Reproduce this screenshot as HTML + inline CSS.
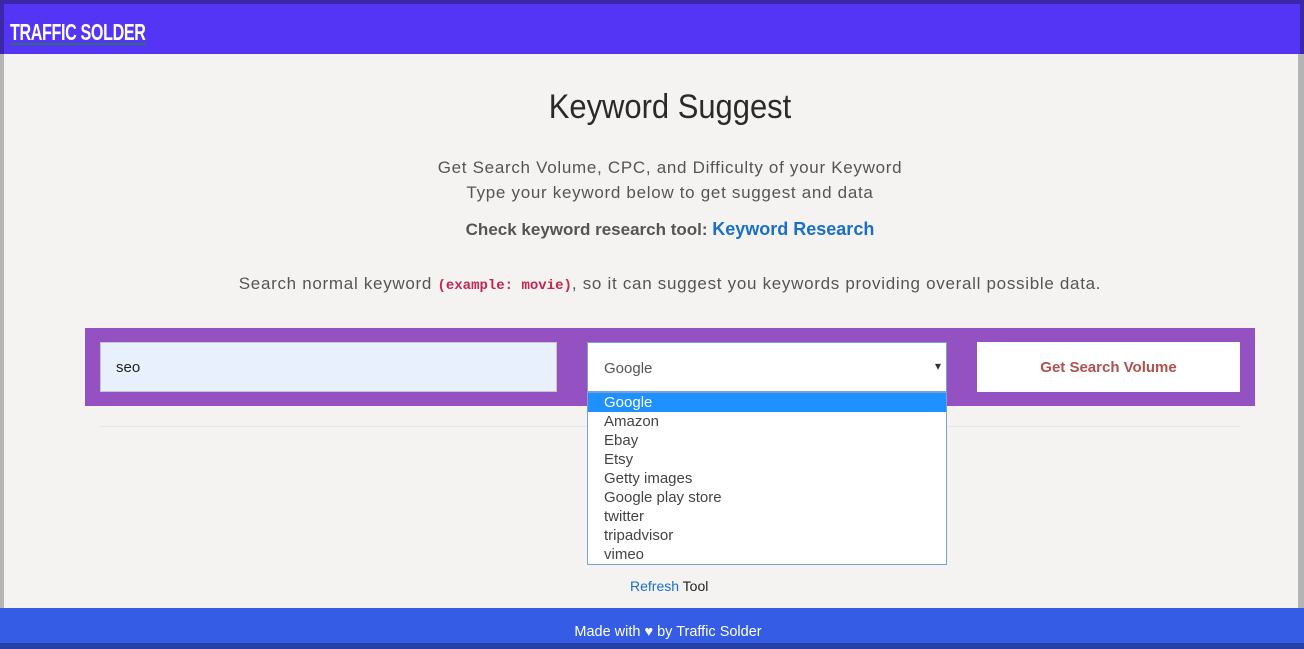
<!DOCTYPE html>
<html><head><meta charset="utf-8"><style>
*{margin:0;padding:0;box-sizing:border-box}
body{width:1304px;height:649px;overflow:hidden;background:#f4f3f1;font-family:"Liberation Sans",sans-serif;position:relative}
.hdr{position:absolute;left:0;top:0;width:1304px;height:54px;background:#5535f5;border-top:4px solid #3b28a8;border-left:4px solid #3b28a8;border-right:4px solid #3b28a8}
.logo{position:absolute;left:6px;top:17px;color:#fff;font:bold 23px "Liberation Sans Narrow","Liberation Sans",sans-serif;letter-spacing:-0.5px;border-bottom:2px solid #2e6e6e;line-height:22px;transform:scaleX(0.70);transform-origin:left}
.lb{position:absolute;left:0;top:54px;width:4px;height:554px;background:#b5b5b5}
.rb{position:absolute;right:0;top:54px;width:6px;height:554px;background:#b5b5b5}
h1{position:absolute;left:0;width:1340px;top:88px;text-align:center;font:normal 34px "Liberation Sans Narrow","Liberation Sans",sans-serif;color:#2a2a2a;transform:scaleX(0.91);transform-origin:670px 0}
.t{position:absolute;left:0;width:1340px;text-align:center;color:#555;font-size:17px}
.w{letter-spacing:0.7px}
.code{font-family:"Liberation Mono",monospace;color:#c7254e;font-size:14px;font-weight:bold;letter-spacing:0}
.bar{position:absolute;left:85px;top:328px;width:1170px;height:78px;background:#9351c1}
.inp{position:absolute;left:100px;top:342px;width:457px;height:50px;background:#e8f0fe;border:1px solid #c8c8c8;font-size:15px;padding:16px 15px;color:#222}
.sel{position:absolute;left:587px;top:342px;width:360px;height:50px;background:#fff;border:1px solid #7aa0da;font-size:15px;padding:17px 16px;color:#555}
.sel:after{content:"▾";position:absolute;right:5px;top:16px;font-size:12px;color:#333}
.btn{position:absolute;left:977px;top:342px;width:263px;height:50px;background:#fff;color:#b35050;font-weight:bold;font-size:15px;text-align:center;line-height:52px}
.dd{position:absolute;left:587px;top:392px;width:360px;height:173px;background:#fff;border:1px solid #7aa0da;font-size:15px;color:#444}
.dd div{height:19px;line-height:19px;padding-left:16px}
.dd .a{background:#1e90ff;color:#fff}
.hr{position:absolute;left:100px;top:426px;width:1140px;height:1px;background:#e6e6e6}
.ref{position:absolute;left:630px;top:578px;font-size:14px;color:#222}
.ft{position:absolute;left:0;top:608px;width:1304px;height:41px;background:#355ce5;color:#fff;font-size:14.5px;text-align:center;padding-top:16px;border-bottom:6px solid #273fa8}
</style></head><body>
<div class="hdr"><span class="logo">TRAFFIC SOLDER</span></div>
<div class="lb"></div><div class="rb"></div>
<h1>Keyword Suggest</h1>
<div class="t w" style="top:158px">Get Search Volume, CPC, and Difficulty of your Keyword</div>
<div class="t w" style="top:183px">Type your keyword below to get suggest and data</div>
<div class="t" style="top:219px;font-weight:bold">Check keyword research tool: <span style="color:#1a6fc9;font-size:18px">Keyword Research</span></div>
<div class="t w" style="top:274px">Search normal keyword <span class="code">(example: movie)</span>, so it can suggest you keywords providing overall possible data.</div>
<div class="bar"></div>
<div class="inp">seo</div>
<div class="sel">Google</div>
<div class="btn">Get Search Volume</div>
<div class="hr"></div>
<div class="dd"><div class="a">Google</div><div>Amazon</div><div>Ebay</div><div>Etsy</div><div>Getty images</div><div>Google play store</div><div>twitter</div><div>tripadvisor</div><div>vimeo</div></div>
<div class="ref"><span style="color:#1a6fc9">Refresh</span> Tool</div>
<div class="ft"><span style="position:relative;left:16px">Made with ♥ by Traffic Solder</span></div>
</body></html>
